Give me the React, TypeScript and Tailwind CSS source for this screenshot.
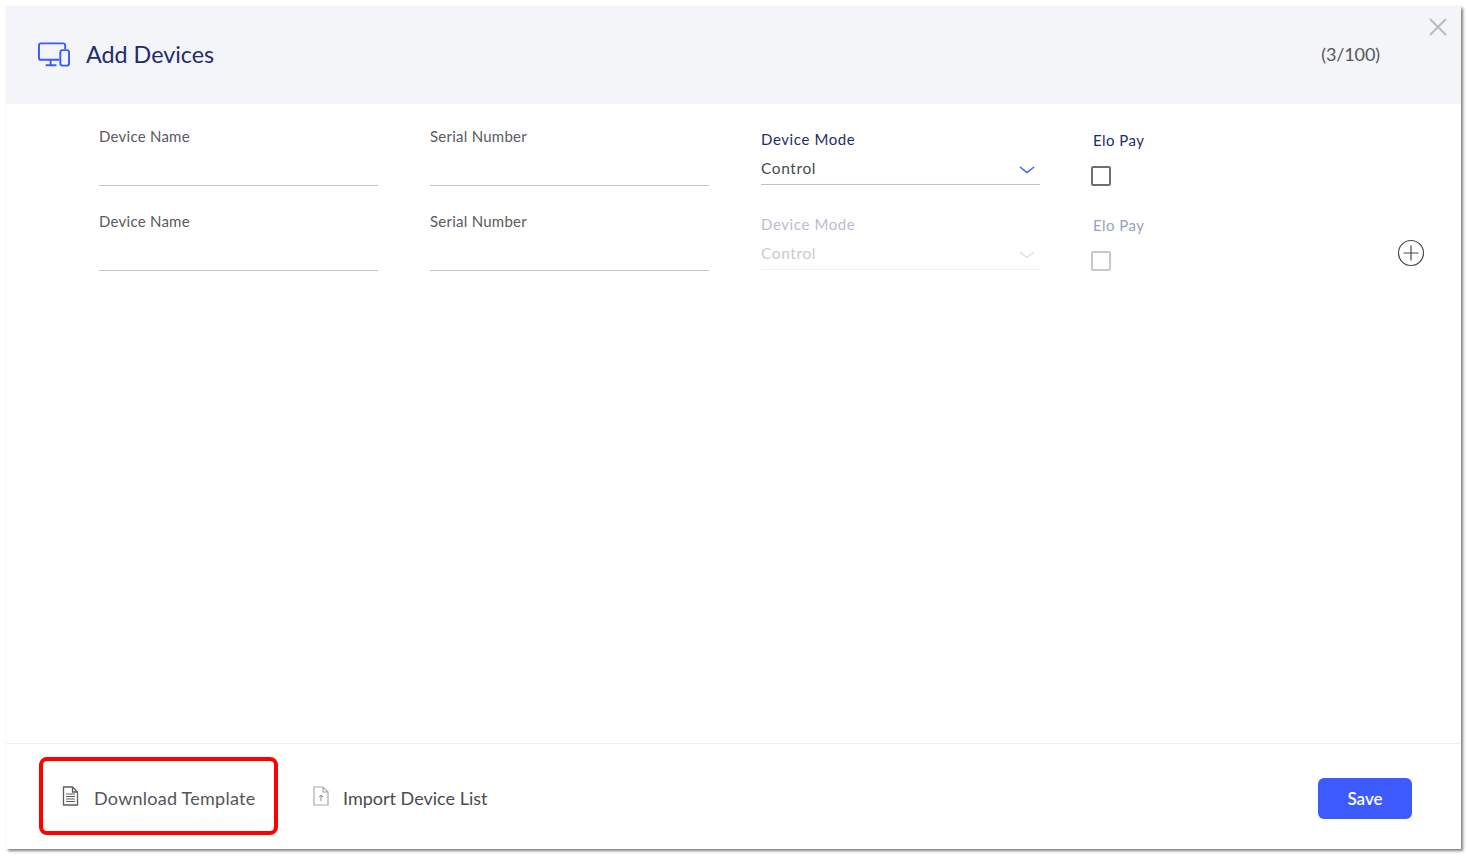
import React from 'react';

const font = "font-['Lato','Open_Sans',sans-serif]";

const DevicesIcon = () => (
  <svg width="32" height="25" viewBox="0 0 33 25" fill="none" stroke="#3d5afe" strokeWidth="2">
    <path d="M22 18H3a2 2 0 0 1-2-2V3a2 2 0 0 1 2-2h23a2 2 0 0 1 2 2v4" />
    <path d="M13 18v5M8 23.5h11" />
    <rect x="23" y="8" width="9" height="16" rx="2.5" />
  </svg>
);

const Chevron = ({ color }: { color: string }) => (
  <svg className="mt-[3px]" width="16" height="8" viewBox="0 0 16 8" fill="none" stroke={color} strokeWidth="1.5">
    <path d="M1 1l7 5.5L15 1" />
  </svg>
);

const TextField = ({ label }: { label: string }) => (
  <div className="w-[279px] h-[62px] border-b border-[#c4c5cb]">
    <div className="text-[15px] leading-5 tracking-[0.25px] text-[#5a5a5f] pt-[2px]">{label}</div>
  </div>
);

const DeviceRow = ({ disabled }: { disabled?: boolean }) => (
  <div className="flex gap-[52px] h-[85px]">
    <TextField label="Device Name" />
    <TextField label="Serial Number" />
    <div className={`w-[279px] h-[61px] pt-[3px] border-b ${disabled ? 'border-[#eceef3]' : 'border-[#bcc0d6]'}`}>
      <div className={`text-[15px] leading-5 tracking-[0.6px] pt-[2px] ${disabled ? 'text-[#b9bdd1]' : 'text-[#232c6a]'}`}>Device Mode</div>
      <div className="flex items-center justify-between pr-[5px] mt-[9px]">
        <span className={`text-[15.5px] leading-5 tracking-[0.6px] ${disabled ? 'text-[#c9cacd]' : 'text-[#4a4a4f]'}`}>Control</span>
        <Chevron color={disabled ? '#dfe1e8' : '#3d5afe'} />
      </div>
    </div>
    <div className="pt-[6px]">
      <div className={`text-[15px] leading-5 tracking-[0.45px] pl-px ${disabled ? 'text-[#9a9fbb]' : 'text-[#232c6a]'}`}>Elo Pay</div>
      <div className={`w-[20px] h-[20px] mt-[16px] -ml-px rounded-[2px] border-2 ${disabled ? 'border-[#c6c8cc]' : 'border-[#6e6e6e]'}`} />
    </div>
  </div>
);

export default function App() {
  return (
    <div className={`relative w-[1468px] h-[856px] bg-white pl-[6px] pt-[6px] ${font}`}>
      <div className="relative w-[1455px] h-[843px] flex flex-col bg-white rounded-tl-[4px] shadow-[2px_2px_3px_rgba(0,0,0,0.5)]">
        <div className="h-[98px] shrink-0 flex items-center justify-between bg-[#f3f5f9] pl-[32px] pr-[81px] pb-[2px]">
          <div className="flex items-center gap-[16px]">
            <DevicesIcon />
            <h1 className="text-[23.3px] text-[#232c6a]">Add Devices</h1>
          </div>
          <span className="text-[18px] tracking-[-0.1px] text-[#55555a]">(3/100)</span>
        </div>
        <svg className="absolute top-[12px] right-[14px]" width="18" height="18" viewBox="0 0 18 18" stroke="#bdbdbd" strokeWidth="2.2">
          <path d="M1 1l16 16M17 1L1 17" />
        </svg>

        <div className="flex-1 pl-[93px] pt-[20px] relative">
          <DeviceRow />
          <DeviceRow disabled />
          <svg className="absolute left-[1391px] top-[135px]" width="28" height="28" viewBox="0 0 28 28" fill="none" stroke="#4a4a4a" strokeWidth="1.2">
            <circle cx="14" cy="14" r="12.5" />
            <path d="M14 6.5v15M6.5 14h15" />
          </svg>
        </div>

        <div className="h-[106px] shrink-0 flex items-center justify-between border-t border-[#f0f0f2] pl-[56px] pr-[49px] pt-[4px]">
          <div className="flex items-center">
            <div className="flex items-center gap-[15px] w-[251px]">
              <svg className="-mt-[5px]" width="17" height="20" viewBox="0 0 17 20" fill="none" stroke="#5c5c5c" strokeWidth="1.3">
                <path d="M1.5 1h9l5 5v13h-14zM10.5 1v5h5" />
                <path d="M4 8h9M4 10.5h9M4 13h9M4 15.5h9" strokeWidth="1" />
              </svg>
              <span className="text-[18px] tracking-[0.25px] text-[#55555a]">Download Template</span>
            </div>
            <div className="flex items-center gap-[14px]">
              <svg className="-mt-[5px]" width="16" height="20" viewBox="0 0 16 20" fill="none" stroke="#a9a9ae" strokeWidth="1.2">
                <path d="M1 1h9l5 5v13H1zM10 1v5h5" />
                <path d="M8 15V9M6 11l2-2 2 2" stroke="#8a8a8f" strokeWidth="1" />
              </svg>
              <span className="text-[18px] text-[#4a4a4f]">Import Device List</span>
            </div>
          </div>
          <button className="w-[94px] h-[41px] rounded-[6px] bg-[#3d5afe] text-white text-[17px] font-semibold">Save</button>
        </div>
      </div>
      {/* red annotation drawn over the screenshot */}
      <div className="absolute left-[39px] top-[757px] w-[239px] h-[78px] rounded-[8px] border-[4px] border-[#fe0000]" />
    </div>
  );
}
